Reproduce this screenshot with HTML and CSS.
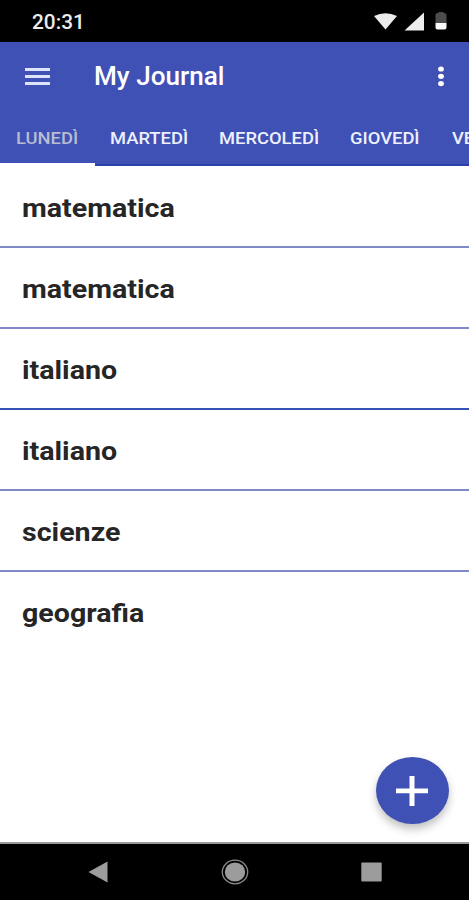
FILE: index.html
```html
<!DOCTYPE html>
<html lang="it">
<head>
    <meta charset="UTF-8">
    <meta name="viewport" content="width=device-width, initial-scale=1.0">
    <title>My Journal</title>
    <link rel="stylesheet" href="styles.css">
</head>
<body>
    <div class="screen">

        <!-- Status bar -->
        <div class="status-bar">
            <span class="clock">20:31</span>
            <svg class="status-icons" width="76" height="20" viewBox="0 0 76 20">
                <path fill="#ececec" d="M1 4Q12.500-1.500 24 4L12.500 17.500Z"/>
                <path fill="#ececec" d="M31.500 18.500L51 0.500V18.500Z"/>
                <path fill="#4c4c4c" d="M62.500 11V3Q62.500 1 65 1L66 0H70L71 1Q73.500 1 73.500 3V11Z"/>
                <path fill="#fafafa" d="M62.500 11H73.500V15.500Q73.500 17.500 71.500 17.500H64.500Q62.500 17.500 62.500 15.500Z"/>
            </svg>
        </div>

        <header class="header">
            <div class="toolbar">
                <svg class="menu-icon" width="25" height="17" viewBox="0 0 25 17">
                    <path fill="#dfe3f8" d="M0 0H25V3H0ZM0 7H25V10H0ZM0 14H25V17H0Z"/>
                </svg>
                <h1 class="title">My Journal</h1>
                <svg class="more-icon" width="6" height="21" viewBox="0 0 6 21">
                    <ellipse fill="#fff" cx="3" cy="3" rx="2.900" ry="2.600"/>
                    <ellipse fill="#fff" cx="3" cy="10.300" rx="2.900" ry="2.600"/>
                    <ellipse fill="#fff" cx="3" cy="17.600" rx="2.900" ry="2.600"/>
                </svg>
            </div>
            <nav class="tabs">
                <a class="tab active"><span>LUNEDÌ</span></a>
                <a class="tab"><span>MARTEDÌ</span></a>
                <a class="tab tab-wide"><span>MERCOLEDÌ</span></a>
                <a class="tab"><span>GIOVEDÌ</span></a>
                <a class="tab"><span>VENERDÌ</span></a>
            </nav>
        </header>

        <!-- Subjects of the day -->
        <ul class="subjects">
            <li><span>matematica</span></li>
            <li><span>matematica</span></li>
            <li class="strong"><span>italiano</span></li>
            <li><span>italiano</span></li>
            <li><span>scienze</span></li>
            <li><span>geografia</span></li>
        </ul>

        <button class="fab" aria-label="+">
            <svg width="32" height="30" viewBox="0 0 32 30">
                <path fill="#fff" d="M13.500 0H18.500V12.500H32V17.300H18.500V30H13.500V17.300H0V12.500H13.500Z"/>
            </svg>
        </button>

        <!-- Navigation bar -->
        <div class="nav-bar">
            <svg width="20" height="22" viewBox="0 0 20 22">
                <path fill="#9c9c9c" d="M0.500 11L19.500 0.500V21.500Z"/>
            </svg>
            <svg width="28" height="26" viewBox="0 0 28 26">
                <ellipse fill="none" stroke="#8c8c8c" stroke-width="1.300" cx="14" cy="13" rx="12.700" ry="11.800"/>
                <ellipse fill="#9c9c9c" cx="14" cy="13" rx="10.200" ry="9.500"/>
            </svg>
            <svg width="21" height="20" viewBox="0 0 21 20">
                <rect fill="#9c9c9c" x="0.300" y="0.500" width="20.400" height="19" rx="1"/>
            </svg>
        </div>
    </div>
</body>
</html>
```
FILE: styles.css
```css
* {
    box-sizing: border-box;
}

body {
    margin: 0;
    font-family: Roboto, sans-serif;
    background: #fff;
}

.screen {
    position: relative;
    display: flex;
    flex-direction: column;
    height: 900px;
    overflow: hidden;
}

.status-bar {
    display: flex;
    justify-content: space-between;
    height: 42px;
    padding: 12px 20px 0 32px;
    background: #000;
}

.clock {
    color: #ececec;
    font-size: 20px;
    font-weight: 500;
    line-height: 21px;
    transform: scaleX(1.04);
    transform-origin: left;
}

/* Header */
.header {
    height: 124px;
    background: #3f51b5;
    border-bottom: 2px solid #2c41ae;
}

.toolbar {
    display: flex;
    align-items: center;
    height: 68px;
    padding: 0 25px;
}

.title {
    margin: 0 auto 0 44px;
    color: #fff;
    font-size: 25px;
    font-weight: 500;
    transform: scaleX(1.045);
    transform-origin: left;
}

.tabs {
    display: flex;
    height: 56px;
    overflow: hidden;
}

.tab {
    flex: none;
    width: 102px;
    padding: 18px 16px 0;
    color: #eef0ff;
    font-size: 17px;
    font-weight: 500;
    line-height: 20px;
}

.tab:nth-child(2) {
    width: 108px;
    padding-left: 15px;
}

.tab-wide {
    width: 131px;
}

.tab span {
    display: inline-block;
    transform: scaleX(1.08);
    transform-origin: left;
}

.tab.active {
    width: 95px;
    color: #b9bdd0;
    border-bottom: 3px solid #fff;
}

/* List */
.subjects {
    flex: 1;
    margin: 0;
    padding: 1px 0 0;
    list-style: none;
}

.subjects li {
    height: 81px;
    padding: 26px 22px 0;
    border-bottom: 2px solid #7f89c8;
    color: #262626;
    font-size: 26px;
    font-weight: 700;
    line-height: 30px;
}

.subjects li.strong {
    border-color: #3353b5;
}

.subjects li:last-child {
    border-bottom: none;
}

.subjects span {
    display: inline-block;
    transform: scaleX(1.1);
    transform-origin: left;
}

/* Floating button */
.fab {
    position: absolute;
    right: 20px;
    bottom: 76px;
    display: flex;
    align-items: center;
    justify-content: center;
    width: 73px;
    height: 67px;
    padding: 0 1px 0 0;
    border: none;
    border-radius: 50%;
    background: #3f51b5;
    box-shadow: 0 5px 9px rgba(0, 0, 0, 0.25);
}

.nav-bar {
    display: flex;
    align-items: center;
    justify-content: space-between;
    height: 58px;
    padding: 0 87px 1px 88px;
    background: #000;
    border-top: 2px solid #9a9a9a;
}
```
